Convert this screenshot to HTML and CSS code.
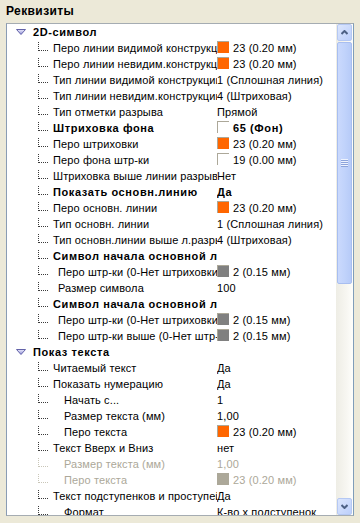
FILE: index.html
```html
<!DOCTYPE html>
<html lang="ru">
<head>
    <meta charset="UTF-8">
    <title>Реквизиты</title>
    <link rel="stylesheet" href="styles.css">
</head>
<body>
<div class="title">Реквизиты</div>
<div class="frame">
    <div class="list">
        <div class="row group">
            <span class="tri"><svg width="10" height="6" viewBox="0 0 10 6"><defs><linearGradient id="tg" x1="0" y1="0" x2="0" y2="1"><stop offset="0" stop-color="#ecebfb"/><stop offset="1" stop-color="#8d8dd6"/></linearGradient></defs><polygon points="0.5,0.5 9.5,0.5 5,5.5" fill="url(#tg)" stroke="#6262a8" stroke-width="1"/></svg></span>
            <span class="gname">2D-символ</span>
        </div>
        <div class="row"><span class="name"><i class="ln"></i><span class="t1">Перо линии видимой конструкции</span></span><span class="val"><i class="sw orange"></i>23 (0.20 мм)</span></div>
        <div class="row"><span class="name"><i class="ln"></i><span class="t1">Перо линии невидим.конструкции</span></span><span class="val"><i class="sw orange"></i>23 (0.20 мм)</span></div>
        <div class="row"><span class="name"><i class="ln"></i><span class="t1">Тип линии видимой конструкции</span></span><span class="val">1 (Сплошная линия)</span></div>
        <div class="row"><span class="name"><i class="ln"></i><span class="t1">Тип линии невидим.конструкции</span></span><span class="val">4 (Штриховая)</span></div>
        <div class="row"><span class="name"><i class="ln"></i><span class="t1">Тип отметки разрыва</span></span><span class="val">Прямой</span></div>
        <div class="row bold"><span class="name"><i class="ln"></i><span class="t1">Штриховка фона</span></span><span class="val"><i class="sw white"></i>65 (Фон)</span></div>
        <div class="row"><span class="name"><i class="ln"></i><span class="t1">Перо штриховки</span></span><span class="val"><i class="sw orange"></i>23 (0.20 мм)</span></div>
        <div class="row"><span class="name"><i class="ln"></i><span class="t1">Перо фона штр-ки</span></span><span class="val"><i class="sw white"></i>19 (0.00 мм)</span></div>
        <div class="row"><span class="name"><i class="ln"></i><span class="t1">Штриховка выше линии разрыва</span></span><span class="val">Нет</span></div>
        <div class="row bold"><span class="name"><i class="ln"></i><span class="t1">Показать основн.линию</span></span><span class="val">Да</span></div>
        <div class="row"><span class="name"><i class="ln"></i><span class="t1">Перо основн. линии</span></span><span class="val"><i class="sw orange"></i>23 (0.20 мм)</span></div>
        <div class="row"><span class="name"><i class="ln"></i><span class="t1">Тип основн. линии</span></span><span class="val">1 (Сплошная линия)</span></div>
        <div class="row"><span class="name"><i class="ln"></i><span class="t1">Тип основн.линии выше л.разрыва</span></span><span class="val">4 (Штриховая)</span></div>
        <div class="row bold"><span class="name"><i class="ln"></i><span class="t1">Символ начала основной линии</span></span><span class="val"></span></div>
        <div class="row"><span class="name"><i class="ln"></i><span class="t2">Перо штр-ки (0-Нет штриховки)</span></span><span class="val"><i class="sw gray"></i>2 (0.15 мм)</span></div>
        <div class="row"><span class="name"><i class="ln"></i><span class="t2">Размер символа</span></span><span class="val">100</span></div>
        <div class="row bold"><span class="name"><i class="ln"></i><span class="t1">Символ начала основной линии</span></span><span class="val"></span></div>
        <div class="row"><span class="name"><i class="ln"></i><span class="t2">Перо штр-ки (0-Нет штриховки)</span></span><span class="val"><i class="sw gray"></i>2 (0.15 мм)</span></div>
        <div class="row"><span class="name"><i class="ln"></i><span class="t2">Перо штр-ки выше (0-Нет штр-ки)</span></span><span class="val"><i class="sw gray"></i>2 (0.15 мм)</span></div>
        <div class="row group">
            <span class="tri"><svg width="10" height="6" viewBox="0 0 10 6"><defs><linearGradient id="tg2" x1="0" y1="0" x2="0" y2="1"><stop offset="0" stop-color="#ecebfb"/><stop offset="1" stop-color="#8d8dd6"/></linearGradient></defs><polygon points="0.5,0.5 9.5,0.5 5,5.5" fill="url(#tg2)" stroke="#6262a8" stroke-width="1"/></svg></span>
            <span class="gname">Показ текста</span>
        </div>
        <div class="row"><span class="name"><i class="ln"></i><span class="t1">Читаемый текст</span></span><span class="val">Да</span></div>
        <div class="row"><span class="name"><i class="ln"></i><span class="t1">Показать нумерацию</span></span><span class="val">Да</span></div>
        <div class="row"><span class="name"><i class="ln"></i><span class="t3">Начать с...</span></span><span class="val">1</span></div>
        <div class="row"><span class="name"><i class="ln"></i><span class="t3">Размер текста (мм)</span></span><span class="val">1,00</span></div>
        <div class="row"><span class="name"><i class="ln"></i><span class="t3">Перо текста</span></span><span class="val"><i class="sw orange"></i>23 (0.20 мм)</span></div>
        <div class="row"><span class="name"><i class="ln"></i><span class="t1">Текст Вверх и Вниз</span></span><span class="val">нет</span></div>
        <div class="row off"><span class="name"><i class="ln"></i><span class="t3">Размер текста (мм)</span></span><span class="val">1,00</span></div>
        <div class="row off"><span class="name"><i class="ln"></i><span class="t3">Перо текста</span></span><span class="val"><i class="sw dis"></i>23 (0.20 мм)</span></div>
        <div class="row"><span class="name"><i class="ln"></i><span class="t1">Текст подступенков и проступей</span></span><span class="val">Да</span></div>
        <div class="row"><span class="name"><i class="ln"></i><span class="t3">Формат</span></span><span class="val">К-во x подступенок</span></div>
    </div>
    <div class="scroll">
        <div class="sbtn"><svg width="7" height="5" viewBox="0 0 7 5"><polyline points="0.5,4 3.5,1 6.5,4" fill="none" stroke="#4d6185" stroke-width="2"/></svg></div>
        <div class="track">
            <div class="thumb"><i class="grip"></i></div>
        </div>
        <div class="sbtn"><svg width="7" height="5" viewBox="0 0 7 5"><polyline points="0.5,1 3.5,4 6.5,1" fill="none" stroke="#4d6185" stroke-width="2"/></svg></div>
    </div>
</div>
</body>
</html>
```

FILE: styles.css
```css
* {
    padding: 0;
    margin: 0;
}
body {
    width: 360px;
    height: 523px;
    overflow: hidden;
    background-color: #ece9d8;
    font-family: "Liberation Sans", Arial, sans-serif;
    font-size: 11px;
    letter-spacing: 0.12px;
    color: #000;
}
i {
    font-style: normal;
}
.title {
    padding: 3px 0 0 6px;
    height: 16px;
    line-height: 16px;
    font-weight: bold;
    font-size: 12px;
    letter-spacing: 0.4px;
}
.frame {
    margin: 4px 0 0 6px;
    width: 348px;
    height: 493px;
    box-sizing: border-box;
    border: 1px solid #a5acb2;
    border-left-color: #8a9cb4;
    border-right-color: #7f9db9;
    background-color: #fff;
    display: flex;
    overflow: hidden;
}
.list {
    flex: 1;
    overflow: hidden;
}
.row {
    display: flex;
    height: 16px;
    line-height: 16px;
    white-space: nowrap;
}
.name {
    flex: none;
    width: 210px;
    height: 16px;
    overflow: hidden;
    display: flex;
}
.ln {
    flex: none;
    width: 10px;
    height: 9px;
    margin: 2px 0 0 31px;
    box-sizing: border-box;
    border-left: 1px dotted #3a3a3a;
    border-bottom: 1px dotted #3a3a3a;
}
.t1 {
    margin-left: 5px;
}
.t2 {
    margin-left: 10px;
}
.t3 {
    margin-left: 16px;
}
.val {
    flex: 1;
    display: flex;
    overflow: hidden;
}
.bold {
    font-weight: bold;
    letter-spacing: 0.6px;
}
.off {
    color: #aca899;
}
.off .ln {
    border-color: #c9c6b8;
}
.group {
    font-weight: bold;
    letter-spacing: 0.6px;
    align-items: center;
}
.tri {
    flex: none;
    display: flex;
    margin-left: 9px;
    margin-top: -1px;
}
.gname {
    margin-left: 7px;
}
.sw {
    flex: none;
    width: 12px;
    height: 12px;
    margin: 1px 4px 0 0;
    box-sizing: border-box;
    border-top: 1px solid #aca899;
    border-left: 1px solid #aca899;
}
.orange {
    background-color: #ff6600;
}
.white {
    background-color: #fff;
}
.gray {
    background-color: #808080;
}
.dis {
    background-color: #aca899;
}
.scroll {
    flex: none;
    width: 17px;
    display: flex;
    flex-direction: column;
    background: linear-gradient(to right, #eeede5, #f7f6f1 60%, #fefefb);
}
.sbtn {
    flex: none;
    height: 15px;
    margin: 0 1px 1px 1px;
    border: 1px solid #b5c8f3;
    border-radius: 2px;
    background: linear-gradient(to bottom right, #dce6fd, #bccffb);
    display: flex;
    align-items: center;
    justify-content: center;
}
.sbtn:last-child {
    margin: 1px 1px 0 1px;
}
.track {
    flex: 1;
}
.thumb {
    height: 240px;
    margin: 0 1px;
    border: 1px solid #a8bef0;
    border-radius: 2px;
    background: linear-gradient(to right, #cad9fd, #c1d3fb 50%, #b7cbf8);
    display: flex;
    align-items: center;
    justify-content: center;
}
.grip {
    width: 7px;
    height: 8px;
    background: repeating-linear-gradient(to bottom, #eef3fe 0, #eef3fe 1px, #8da4db 1px, #8da4db 2px);
}
```
